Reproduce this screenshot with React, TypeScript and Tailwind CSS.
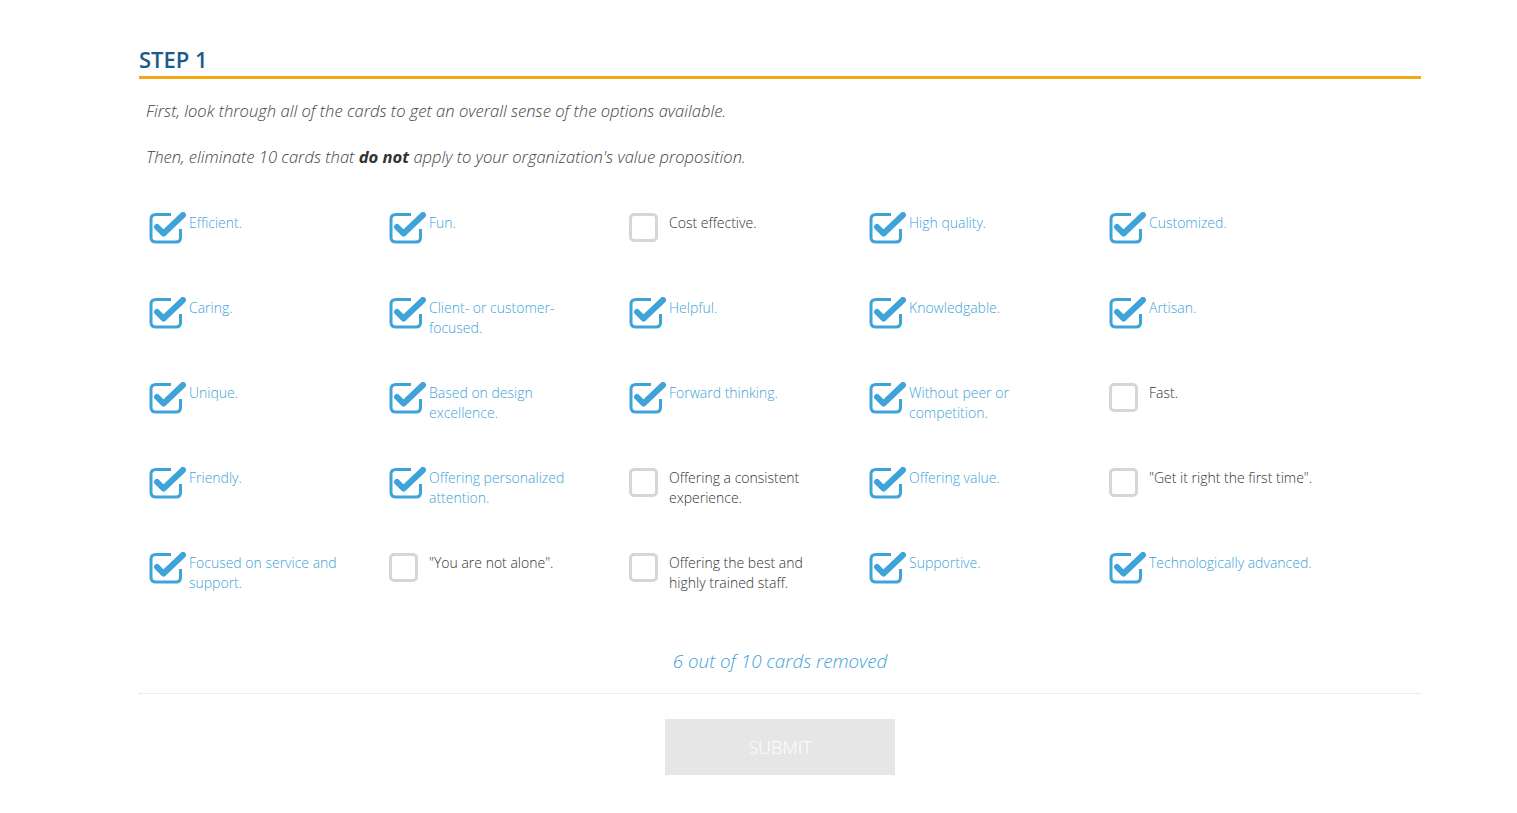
import React from "react";

interface Card {
  label: string;
  kept: boolean;
}

const cards: Card[] = [
  { label: "Efficient.", kept: true },
  { label: "Fun.", kept: true },
  { label: "Cost effective.", kept: false },
  { label: "High quality.", kept: true },
  { label: "Customized.", kept: true },
  { label: "Caring.", kept: true },
  { label: "Client- or customer-focused.", kept: true },
  { label: "Helpful.", kept: true },
  { label: "Knowledgable.", kept: true },
  { label: "Artisan.", kept: true },
  { label: "Unique.", kept: true },
  { label: "Based on design excellence.", kept: true },
  { label: "Forward thinking.", kept: true },
  { label: "Without peer or competition.", kept: true },
  { label: "Fast.", kept: false },
  { label: "Friendly.", kept: true },
  { label: "Offering personalized attention.", kept: true },
  { label: "Offering a consistent experience.", kept: false },
  { label: "Offering value.", kept: true },
  { label: "\"Get it right the first time\".", kept: false },
  { label: "Focused on service and support.", kept: true },
  { label: "\"You are not alone\".", kept: false },
  { label: "Offering the best and highly trained staff.", kept: false },
  { label: "Supportive.", kept: true },
  { label: "Technologically advanced.", kept: true },
];

function CheckedIcon() {
  return (
    <svg width="40" height="32" viewBox="0 0 40 32" className="block">
      {/* box outline, open at the top right where the tick passes */}
      <path
        d="M22 2.5 H7 Q2 2.5 2 7 V25.5 Q2 30 7 30 H27 Q31.5 30 31.5 25.5 V17"
        fill="none"
        stroke="#3ea3d8"
        strokeWidth="3"
      />
      {/* tick */}
      <path
        d="M8 15 L14.5 21.5 L34 3"
        fill="none"
        stroke="#3ea3d8"
        strokeWidth="6"
        strokeLinecap="round"
        strokeLinejoin="round"
      />
    </svg>
  );
}

function EmptyIcon() {
  return (
    <div className="w-[40px] h-[32px] flex items-start">
      <div className="w-[29px] h-[29px] mt-[1px] rounded-[5px] border-[3px] border-[#d6d6d6]" />
    </div>
  );
}

export default function App() {
  const removed = cards.filter((c) => !c.kept).length;

  return (
    <div className="min-h-screen bg-white font-['Open_Sans',sans-serif] font-light">
      <div className="w-[1282px] ml-[139px] pt-[44px]">
        {/* Header */}
        <h2 className="text-[22px] leading-[30px] font-semibold text-[#1a5b8c] pb-[2px]">
          STEP 1
        </h2>
        <div className="h-[3px] bg-[#f3a712]" />

        {/* Instructions */}
        <div className="pl-[7px] pt-[21px] text-[16.6px] leading-[22px] italic text-[#444]">
          <p>First, look through all of the cards to get an overall sense of the options available.</p>
          <p className="mt-[24px]">
            Then, eliminate 10 cards that <b className="font-bold text-[#333]">do not</b> apply to your
            organization's value proposition.
          </p>
        </div>

        {/* Cards */}
        <div className="grid grid-cols-[repeat(5,240px)] auto-rows-[85px] pl-[10px] pt-[44px]">
          {cards.map((card) => (
            <div key={card.label} className="flex items-start">
              {card.kept ? <CheckedIcon /> : <EmptyIcon />}
              <span
                className={`max-w-[170px] text-[14px] leading-[20px] pt-[1px] ${
                  card.kept ? "text-[#3ea3d8]" : "text-[#333]"
                }`}
              >
                {card.label}
              </span>
            </div>
          ))}
        </div>

        {/* Counter */}
        <p className="text-center italic text-[18.8px] leading-[24px] text-[#3ea3d8] mt-[12px]">
          {removed} out of 10 cards removed
        </p>

        <div className="mt-[20px] border-t border-dotted border-[#dcdcdc]" />

        <div className="flex justify-center pt-[25px]">
          <button className="w-[230px] h-[56px] bg-[#e6e6e6] text-white text-[18px] font-light">
            SUBMIT
          </button>
        </div>
      </div>
    </div>
  );
}
